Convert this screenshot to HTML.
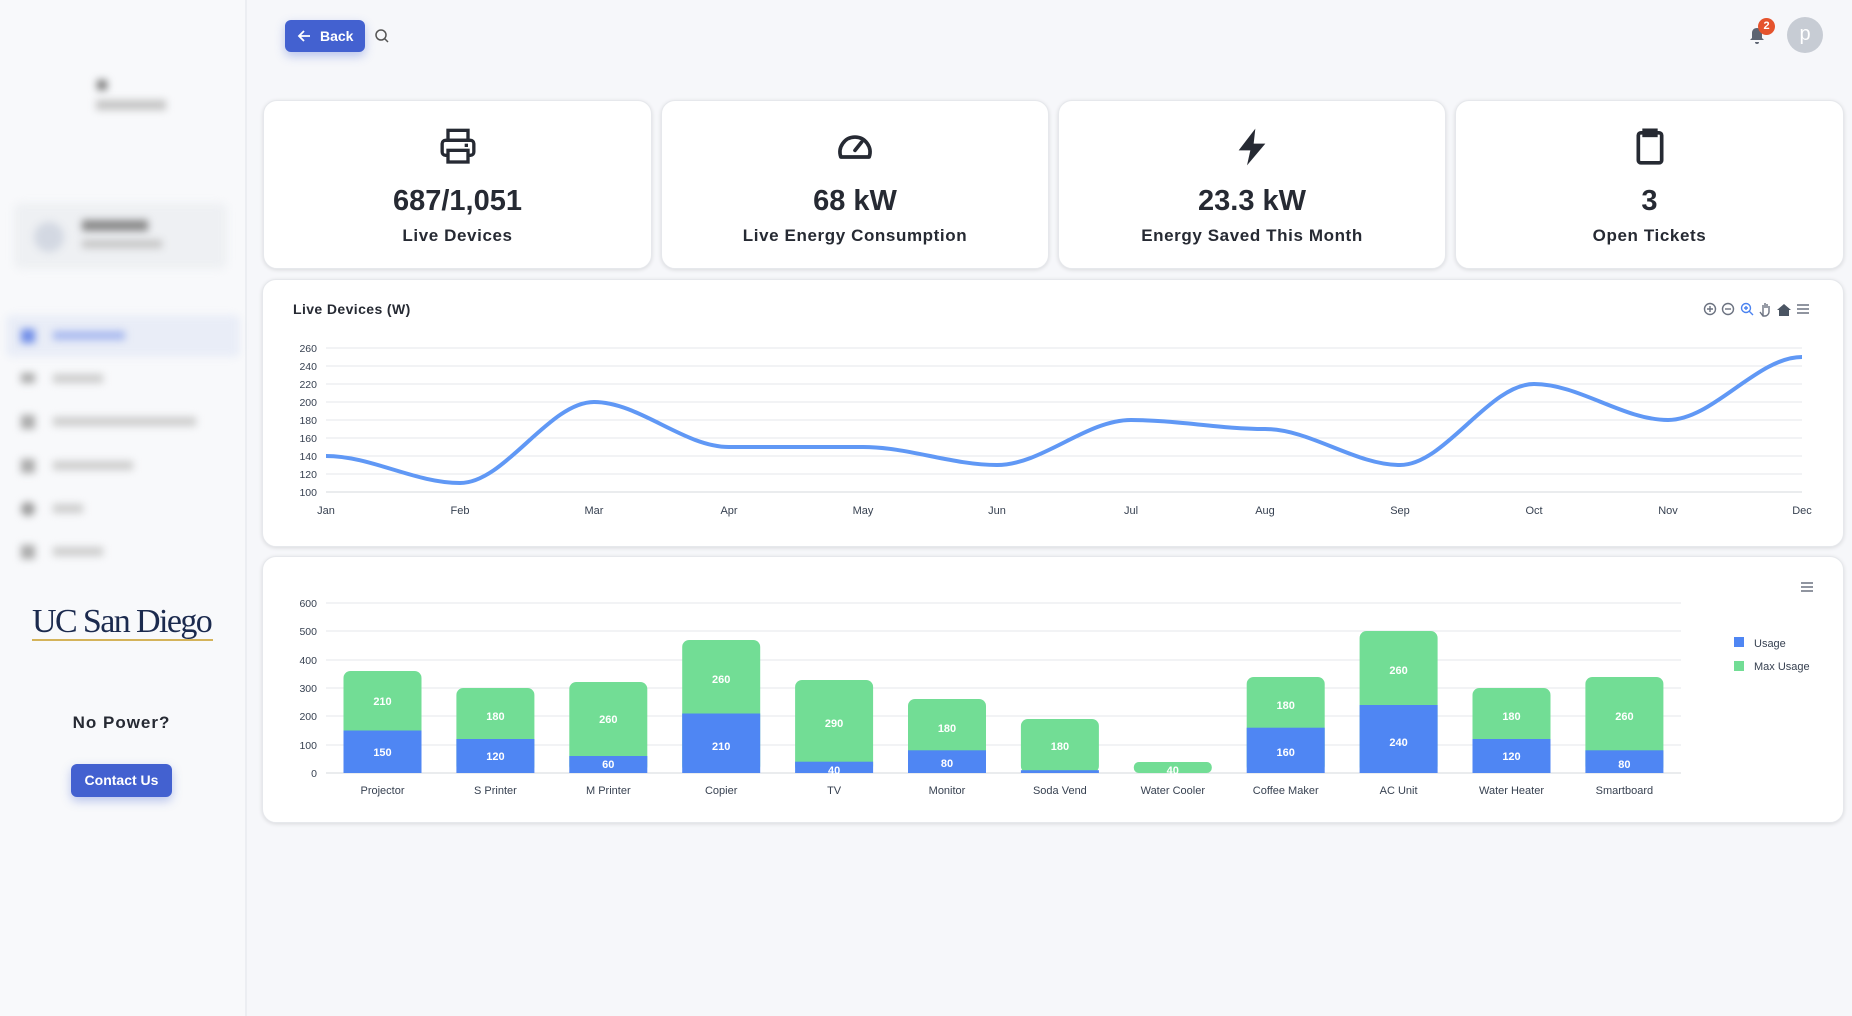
<!DOCTYPE html>
<html><head><meta charset="utf-8"><style>
*{margin:0;padding:0;box-sizing:border-box}
body{width:1852px;height:1016px;background:#f6f7fa;font-family:"Liberation Sans",sans-serif;position:relative;overflow:hidden;color:#1f2330}
.side{position:absolute;left:0;top:0;width:247px;height:1016px;background:#f8f9fb;border-right:2px solid #eceef2}
.blur{filter:blur(4px);position:absolute}
.card{position:absolute;background:#fff;border-radius:14px;box-shadow:0 1px 4px rgba(0,0,0,.12);border:1px solid #e6e8ec}
.stat{top:100px;height:169px;text-align:center}
.stat svg{position:absolute;left:50%;top:26px;transform:translateX(-50%)}
.stat .v{position:absolute;left:0;right:0;top:84px;font-size:29px;font-weight:bold;color:#262a33}
.stat .l{position:absolute;left:0;right:0;top:125px;font-size:17px;font-weight:bold;letter-spacing:.6px;color:#262a33}
.btn{position:absolute;background:#4361d0;color:#fff;border-radius:6px;font-weight:bold;box-shadow:0 4px 10px rgba(67,97,208,.35)}
</style></head><body>
<div class="side">
  <div class="blur" style="left:97px;top:80px;width:10px;height:10px;background:#777;"></div>
  <div class="blur" style="left:96px;top:100px;width:70px;height:10px;background:#c4c4c4;"></div>
  <div class="blur" style="left:14px;top:203px;width:213px;height:66px;background:#eef0f3;border-radius:8px"></div>
  <div class="blur" style="left:34px;top:222px;width:30px;height:30px;background:#d3d8e2;border-radius:50%"></div>
  <div class="blur" style="left:82px;top:220px;width:66px;height:11px;background:#888"></div>
  <div class="blur" style="left:82px;top:240px;width:80px;height:8px;background:#c4c4c4"></div>
  <div class="blur" style="left:6px;top:315px;width:234px;height:42px;background:#e9edf7;border-radius:6px"></div>
  <div class="blur" style="left:21px;top:329px;width:14px;height:14px;background:#6f8de8"></div>
  <div class="blur" style="left:53px;top:331px;width:72px;height:9px;background:#a8b9ef"></div>
  <div class="blur" style="left:21px;top:373px;width:14px;height:10px;background:#aaa"></div>
  <div class="blur" style="left:53px;top:374px;width:50px;height:9px;background:#ccc"></div>
  <div class="blur" style="left:21px;top:415px;width:14px;height:14px;background:#aaa"></div>
  <div class="blur" style="left:53px;top:417px;width:143px;height:9px;background:#ccc"></div>
  <div class="blur" style="left:21px;top:459px;width:14px;height:14px;background:#aaa"></div>
  <div class="blur" style="left:53px;top:461px;width:80px;height:9px;background:#ccc"></div>
  <div class="blur" style="left:21px;top:502px;width:14px;height:14px;background:#999;border-radius:50%"></div>
  <div class="blur" style="left:53px;top:504px;width:30px;height:9px;background:#ccc"></div>
  <div class="blur" style="left:21px;top:545px;width:14px;height:14px;background:#aaa"></div>
  <div class="blur" style="left:53px;top:547px;width:50px;height:9px;background:#ccc"></div>
  <div style="position:absolute;left:32px;top:603px;width:181px;font-family:'Liberation Serif',serif;font-size:34px;color:#1b2a4e;letter-spacing:-1.6px;white-space:nowrap;line-height:38px">UC San Diego</div>
  <div style="position:absolute;left:32px;top:639px;width:181px;height:2px;background:#d4b35a"></div>
  <div style="position:absolute;left:0;width:243px;top:713px;text-align:center;font-size:17px;font-weight:bold;letter-spacing:1px;color:#262a33">No Power?</div>
  <div class="btn" style="left:71px;top:764px;width:101px;height:33px;font-size:14px;line-height:33px;text-align:center">Contact Us</div>
</div>

<div class="btn" style="left:285px;top:20px;width:80px;height:32px;font-size:14px;line-height:32px;padding-left:35px">Back</div>
<svg style="position:absolute;left:297px;top:29px" width="14" height="14" viewBox="0 0 14 14"><path d="M13 7H2M7 2L2 7l5 5" stroke="#fff" stroke-width="1.8" fill="none"/></svg>
<svg style="position:absolute;left:374px;top:28px" width="16" height="16" viewBox="0 0 16 16"><circle cx="7" cy="7" r="5" stroke="#555" stroke-width="1.5" fill="none"/><path d="M10.5 10.5L14 14" stroke="#555" stroke-width="1.5"/></svg>
<svg style="position:absolute;left:1748px;top:26px" width="18" height="20" viewBox="0 0 18 20"><path d="M9 2c-3 0-5 2-5 5v5l-2 2h14l-2-2V7c0-3-2-5-5-5zM7 16a2 2 0 0 0 4 0z" fill="#5d6472"/></svg>
<div style="position:absolute;left:1758px;top:18px;width:17px;height:17px;border-radius:50%;background:#e5532d;color:#fff;font-size:11px;font-weight:bold;text-align:center;line-height:17px">2</div>
<div style="position:absolute;left:1787px;top:17px;width:36px;height:36px;border-radius:50%;background:#c7ccd4;color:#fff;font-size:20px;text-align:center;line-height:34px">p</div>

<div class="card stat" style="left:263px;width:389px">
<svg width="40" height="40" viewBox="0 0 24 24" fill="none" stroke="#262a33" stroke-width="2"><rect x="6" y="2" width="12" height="6"/><rect x="2.5" y="8" width="19" height="9" rx="2"/><rect x="6" y="14" width="12" height="7" fill="#fff"/><path d="M16 11h2"/></svg>
<div class="v">687/1,051</div><div class="l">Live Devices</div></div>
<div class="card stat" style="left:661px;width:388px">
<svg width="40" height="40" viewBox="0 0 24 24" fill="none" stroke="#262a33" stroke-width="2.2"><path d="M3.5 18a9 9 0 1 1 17 0z" stroke-linejoin="round"/><path d="M12 14l4-5" stroke-linecap="round"/></svg>
<div class="v">68 kW</div><div class="l">Live Energy Consumption</div></div>
<div class="card stat" style="left:1058px;width:388px">
<svg width="40" height="40" viewBox="0 0 24 24"><path d="M14 1L4 14h7l-2 9 11-13h-7z" fill="#262a33"/></svg>
<div class="v">23.3 kW</div><div class="l">Energy Saved This Month</div></div>
<div class="card stat" style="left:1455px;width:389px">
<svg width="40" height="40" viewBox="0 0 24 24" fill="none" stroke="#262a33" stroke-width="2.2"><rect x="5" y="3.5" width="14" height="18" rx="1.5"/><rect x="8.5" y="2" width="7" height="3" fill="#262a33"/></svg>
<div class="v">3</div><div class="l">Open Tickets</div></div>

<div class="card" style="left:262px;top:279px;width:1582px;height:268px"></div>
<div class="card" style="left:262px;top:556px;width:1582px;height:267px"></div>

<svg style="position:absolute;left:0;top:0" width="1852" height="1016" font-family="Liberation Sans, sans-serif">
<text x="293" y="314" font-size="14" font-weight="bold" fill="#262a33" letter-spacing=".4">Live Devices (W)</text>
<g fill="none" stroke-width="1.4" stroke="#6b7280">
<circle cx="1710" cy="309" r="5.5"/><path d="M1707 309h6M1710 306v6"/>
<circle cx="1728" cy="309" r="5.5"/><path d="M1725 309h6"/>
<circle cx="1746" cy="308" r="4.5" stroke="#4b83f0"/><path d="M1749 311l4 4M1744 308h4M1746 306v4" stroke="#4b83f0"/>
<path d="M1763 316v-7m0 0v-4m2 3v-5m2 5v-4m2 5v-3v6c0 2-2 4-4 4h-2l-3-4"/>
<path d="M1784 304l-7 6h2v6h10v-6h2z" fill="#4b5563" stroke="none"/>
<path d="M1797 305h12M1797 309h12M1797 313h12"/>
</g>
<g stroke="#e5e7eb" stroke-width="1">
<path d="M326 348H1802M326 366H1802M326 384H1802M326 402H1802M326 420H1802M326 438H1802M326 456H1802M326 474H1802"/>
<path d="M326 492H1802" stroke="#d5d8dd"/>
</g>
<g font-size="10.5" fill="#374151" text-anchor="end">
<text x="317" y="352">260</text><text x="317" y="370">240</text><text x="317" y="388">220</text><text x="317" y="406">200</text><text x="317" y="424">180</text><text x="317" y="442">160</text><text x="317" y="460">140</text><text x="317" y="478">120</text><text x="317" y="496">100</text>
</g>
<g font-size="11" fill="#374151" text-anchor="middle">
<text x="326" y="514">Jan</text><text x="460" y="514">Feb</text><text x="594" y="514">Mar</text><text x="729" y="514">Apr</text><text x="863" y="514">May</text><text x="997" y="514">Jun</text><text x="1131" y="514">Jul</text><text x="1265" y="514">Aug</text><text x="1400" y="514">Sep</text><text x="1534" y="514">Oct</text><text x="1668" y="514">Nov</text><text x="1802" y="514">Dec</text>
</g>
<path d="M326 456C371 456 415 483 460 483C505 483 549 402 594 402C639 402 684 447 729 447C774 447 818 447 863 447C908 447 952 465 997 465C1042 465 1086 420 1131 420C1176 420 1220 429 1265 429C1310 429 1355 465 1400 465C1445 465 1489 384 1534 384C1579 384 1623 420 1668 420C1713 420 1757 357 1802 357" fill="none" stroke="#6098f5" stroke-width="4"/>

<path d="M1801 583h12M1801 587h12M1801 591h12" stroke="#6b7280" stroke-width="1.4"/>
<g stroke="#e5e7eb"><path d="M326 603H1681M326 631H1681M326 660H1681M326 688H1681M326 716H1681M326 745H1681"/><path d="M326 773H1681" stroke="#d5d8dd"/></g>
<g font-size="10.5" fill="#374151" text-anchor="end">
<text x="317" y="607">600</text><text x="317" y="635">500</text><text x="317" y="664">400</text><text x="317" y="692">300</text><text x="317" y="720">200</text><text x="317" y="749">100</text><text x="317" y="777">0</text>
</g>
<g fill="#72dd95">
<rect x="343.5" y="671" width="78" height="102" rx="7"/>
<rect x="456.4" y="688" width="78" height="85" rx="7"/>
<rect x="569.3" y="682" width="78" height="91" rx="7"/>
<rect x="682.2" y="640" width="78" height="133" rx="7"/>
<rect x="795.1" y="680" width="78" height="93" rx="7"/>
<rect x="908" y="699" width="78" height="74" rx="7"/>
<rect x="1020.9" y="719" width="78" height="54" rx="7"/>
<rect x="1133.8" y="762" width="78" height="11" rx="5"/>
<rect x="1246.7" y="677" width="78" height="96" rx="7"/>
<rect x="1359.6" y="631" width="78" height="142" rx="7"/>
<rect x="1472.5" y="688" width="78" height="85" rx="7"/>
<rect x="1585.4" y="677" width="78" height="96" rx="7"/>
</g>
<g fill="#4f86f3">
<rect x="343.5" y="730.5" width="78" height="42.5"/>
<rect x="456.4" y="739" width="78" height="34"/>
<rect x="569.3" y="756" width="78" height="17"/>
<rect x="682.2" y="713.5" width="78" height="59.5"/>
<rect x="795.1" y="761.7" width="78" height="11.3"/>
<rect x="908" y="750.3" width="78" height="22.7"/>
<rect x="1020.9" y="770.2" width="78" height="2.8"/>
<rect x="1246.7" y="727.7" width="78" height="45.3"/>
<rect x="1359.6" y="705" width="78" height="68"/>
<rect x="1472.5" y="739" width="78" height="34"/>
<rect x="1585.4" y="750.3" width="78" height="22.7"/>
</g>
<g font-size="11" font-weight="bold" fill="#fff" text-anchor="middle">
<text x="382.5" y="705">210</text><text x="382.5" y="756">150</text>
<text x="495.4" y="720">180</text><text x="495.4" y="760">120</text>
<text x="608.3" y="723">260</text><text x="608.3" y="768">60</text>
<text x="721.2" y="683">260</text><text x="721.2" y="750">210</text>
<text x="834.1" y="727">290</text><text x="834.1" y="774">40</text>
<text x="947" y="732">180</text><text x="947" y="767">80</text>
<text x="1059.9" y="750">180</text>
<text x="1172.8" y="774">40</text>
<text x="1285.7" y="709">180</text><text x="1285.7" y="756">160</text>
<text x="1398.6" y="674">260</text><text x="1398.6" y="746">240</text>
<text x="1511.5" y="720">180</text><text x="1511.5" y="760">120</text>
<text x="1624.4" y="720">260</text><text x="1624.4" y="768">80</text>
</g>
<g font-size="11" fill="#374151" text-anchor="middle">
<text x="382.5" y="794">Projector</text><text x="495.4" y="794">S Printer</text><text x="608.3" y="794">M Printer</text><text x="721.2" y="794">Copier</text><text x="834.1" y="794">TV</text><text x="947" y="794">Monitor</text><text x="1059.9" y="794">Soda Vend</text><text x="1172.8" y="794">Water Cooler</text><text x="1285.7" y="794">Coffee Maker</text><text x="1398.6" y="794">AC Unit</text><text x="1511.5" y="794">Water Heater</text><text x="1624.4" y="794">Smartboard</text>
</g>
<rect x="1734" y="637" width="10" height="10" fill="#4f86f3"/>
<rect x="1734" y="661" width="10" height="10" fill="#72dd95"/>
<text x="1754" y="647" font-size="11" fill="#374151">Usage</text>
<text x="1754" y="670" font-size="11" fill="#374151">Max Usage</text>
</svg>
</body></html>
